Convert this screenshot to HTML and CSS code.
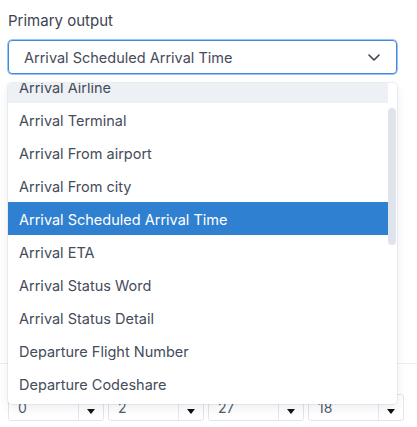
FILE: index.html
```html
<!DOCTYPE html>
<html>
<head>
<meta charset="utf-8">
<link rel="stylesheet" href="styles.css">
</head>
<body>
<div class="page">
  <div class="field">
    <label class="label">Primary output</label>
    <div class="select-wrap">
      <div class="select">
        <span class="select-value">Arrival Scheduled Arrival Time</span>
        <svg class="chevron" width="12" height="7" viewBox="0 0 12 7"><path d="M1 1l5 5 5-5" fill="none" stroke="#3d4451" stroke-width="1.6" stroke-linecap="round" stroke-linejoin="round"/></svg>
      </div>
      <div class="menu">
        <div class="menu-list">
          <div class="menu-scroll">
            <div class="opt focused">Arrival Airline</div>
            <div class="opt">Arrival Terminal</div>
            <div class="opt">Arrival From airport</div>
            <div class="opt">Arrival From city</div>
            <div class="opt selected">Arrival Scheduled Arrival Time</div>
            <div class="opt">Arrival ETA</div>
            <div class="opt">Arrival Status Word</div>
            <div class="opt">Arrival Status Detail</div>
            <div class="opt">Departure Flight Number</div>
            <div class="opt">Departure Codeshare</div>
            <div class="opt">Departure Airline</div>
          </div>
        </div>
        <div class="track"><div class="thumb"></div></div>
      </div>
    </div>
  </div>
  <div class="divider"></div>
  <div class="time-row">
    <div class="mini"><span class="mini-value">0</span><span class="mini-arrow"><i class="tri"></i></span></div>
    <div class="mini"><span class="mini-value">2</span><span class="mini-arrow"><i class="tri"></i></span></div>
    <div class="mini"><span class="mini-value">27</span><span class="mini-arrow"><i class="tri"></i></span></div>
    <div class="mini"><span class="mini-value">18</span><span class="mini-arrow"><i class="tri"></i></span></div>
  </div>
</div>
</body>
</html>
```

FILE: styles.css
```css
html, body {
  margin: 0;
  padding: 0;
  background: #ffffff;
}
body {
  font-family: Inter, "Noto Sans", "Liberation Sans", sans-serif;
  color: #454c5a;
  overflow: hidden;
}
.page {
  padding-top: 11px;
  height: 427px;
  box-sizing: border-box;
}
.field {
  padding: 0 20px 0 8px;
}
.label {
  display: block;
  font-size: 15px;
  line-height: 20px;
  color: #3d4451;
  margin-bottom: 9px;
}
.select-wrap {
  position: relative;
  width: 389px;
}
.select {
  height: 34px;
  box-sizing: border-box;
  border: 1px solid #3e8ae0;
  box-shadow: 0 0 0 0.5px #3e8ae0;
  border-radius: 4px;
  display: flex;
  align-items: center;
  padding: 1px 16px 0 15px;
  font-size: 14.5px;
  color: #454c5a;
}
.select-value {
  flex: 1;
}
.chevron {
  display: block;
  margin-top: -1px;
}
.menu {
  position: absolute;
  top: 43px;
  left: 0;
  right: 0;
  height: 321px;
  background: #ffffff;
  border-radius: 4px;
  box-shadow: 0 0 0 1px rgba(20, 40, 80, 0.07), 0 4px 11px rgba(20, 40, 80, 0.08);
  display: flex;
  overflow: hidden;
  z-index: 2;
}
.menu-list {
  flex: 1;
  overflow: hidden;
}
.menu-scroll {
  margin-top: -13px;
}
.opt {
  height: 33px;
  box-sizing: border-box;
  padding: 2px 11px 0;
  display: flex;
  align-items: center;
  font-size: 14.5px;
  color: #454c5a;
  white-space: nowrap;
}
.opt.focused {
  background: #edf0f4;
}
.opt.selected {
  background: #2f80d1;
  color: #ffffff;
}
.track {
  width: 8px;
  margin-right: 1px;
}
.thumb {
  margin-top: 25px;
  height: 137px;
  border-radius: 4px;
  background: #dfe4ec;
}
.divider {
  margin-top: 289px;
  height: 1px;
  background: #edf0f3;
}
.time-row {
  margin-top: 30px;
  padding-left: 8px;
  display: grid;
  grid-template-columns: repeat(4, 96px);
  column-gap: 4px;
}
.mini {
  height: 27px;
  box-sizing: border-box;
  border: 1px solid #e2e5ea;
  border-radius: 3px;
  display: flex;
}
.mini-value {
  flex: 1;
  padding-left: 9px;
  font-size: 14px;
  line-height: 26px;
  color: #555c68;
}
.mini-arrow {
  width: 25px;
  border-left: 1px solid #e6e8ec;
  display: flex;
  align-items: center;
  justify-content: center;
  padding-top: 8px;
  box-sizing: border-box;
}
.tri {
  display: block;
  width: 0;
  height: 0;
  border-left: 4px solid transparent;
  border-right: 4px solid transparent;
  border-top: 5px solid #111111;
}
```
